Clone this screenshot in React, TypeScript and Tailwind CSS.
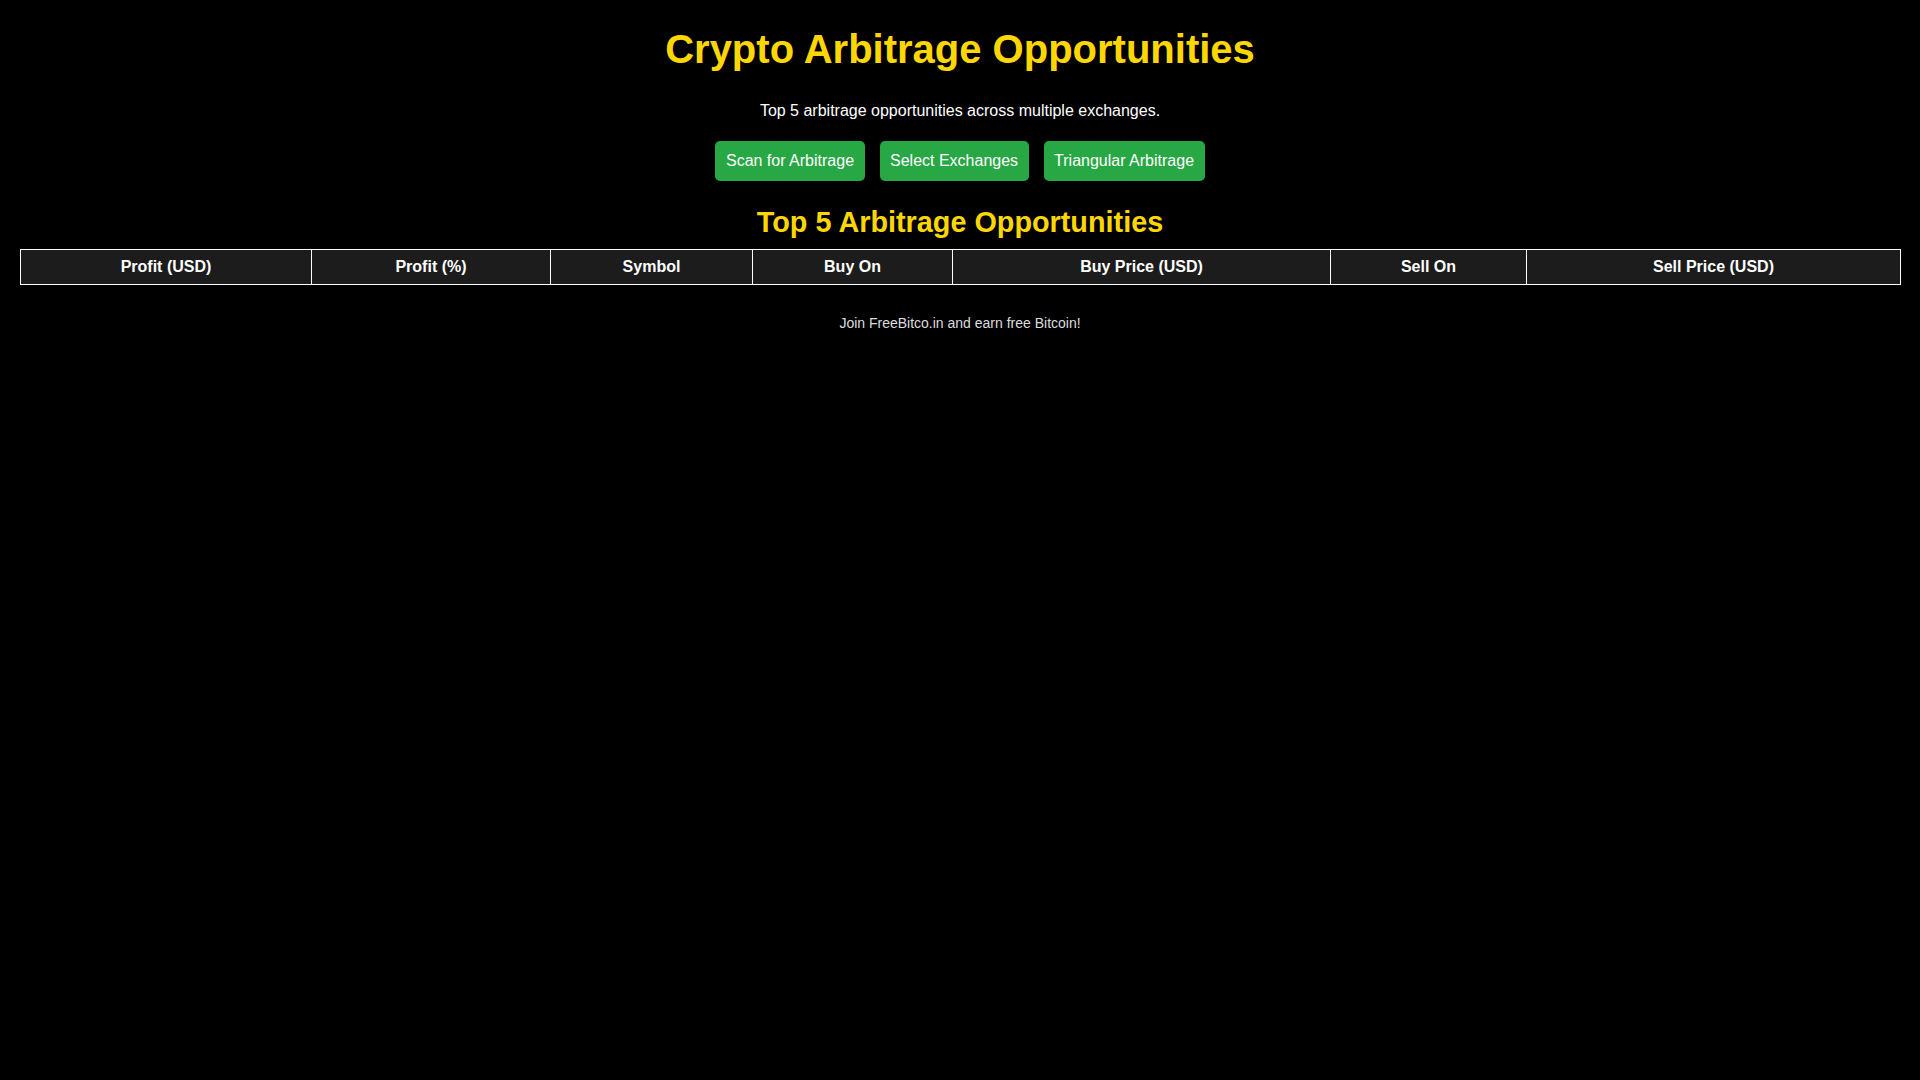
const columns = [
  { label: "Profit (USD)", width: "w-[291px]" },
  { label: "Profit (%)", width: "w-[239px]" },
  { label: "Symbol", width: "w-[202px]" },
  { label: "Buy On", width: "w-[200px]" },
  { label: "Buy Price (USD)", width: "w-[378px]" },
  { label: "Sell On", width: "w-[196px]" },
  { label: "Sell Price (USD)", width: "w-[374px]" },
];

const actions = ["Scan for Arbitrage", "Select Exchanges", "Triangular Arbitrage"];

export default function App() {
  return (
    <div className="min-h-screen bg-black text-white font-['Liberation_Sans',Arial,sans-serif] text-center">
      <h1 className="pt-[26px] text-[40px] leading-[46px] font-bold text-[#FFD700]">
        Crypto Arbitrage Opportunities
      </h1>
      <p className="mt-[30px] text-[16px] leading-[18px]">
        Top 5 arbitrage opportunities across multiple exchanges.
      </p>

      <div className="mt-[21px] flex justify-center gap-[15px]">
        {actions.map((a) => (
          <button
            key={a}
            className="h-[40px] px-[10.5px] rounded-[5px] bg-[#28a745] text-white text-[16px] leading-[18px]"
          >
            {a}
          </button>
        ))}
      </div>

      <h2 className="mt-[25px] text-[28.8px] leading-[33px] font-bold text-[#FFD700]">
        Top 5 Arbitrage Opportunities
      </h2>

      <div className="px-[20px] mt-[10px]">
        <table className="w-full table-fixed border-collapse">
          <thead>
            <tr>
              {columns.map((c) => (
                <th
                  key={c.label}
                  className={`${c.width} h-[35px] p-0 border border-white bg-[#1c1c1c] text-[16px] leading-[18px] font-bold text-center`}
                >
                  {c.label}
                </th>
              ))}
            </tr>
          </thead>
          <tbody></tbody>
        </table>
      </div>

      <p className="mt-[30px] text-[14px] leading-[16px] text-[#dddddd]">
        Join FreeBitco.in and earn free Bitcoin!
      </p>
    </div>
  );
}
